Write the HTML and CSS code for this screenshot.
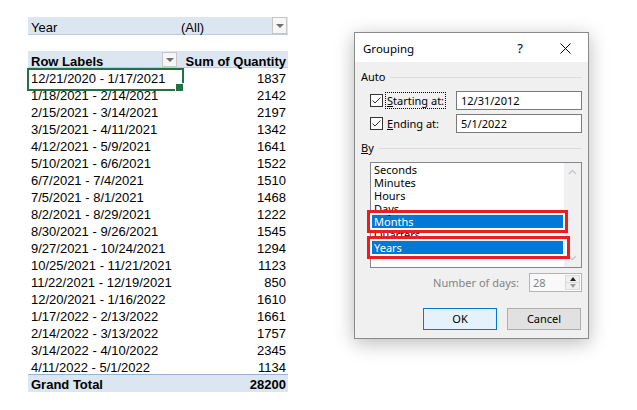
FILE: index.html
```html
<!DOCTYPE html>
<html>
<head>
<meta charset="utf-8">
<title>Grouping</title>
<link rel="stylesheet" href="styles.css">
</head>
<body>
<div class="pivot">
  <div class="filter-row">
    <div class="c1"><span class="txt pl3">Year</span></div>
    <div class="c2"><span class="txt pl1">(All)</span><span class="dd dd-filter"></span></div>
  </div>
  <div class="head-row">
    <div class="c1"><span class="txt pl3 b">Row Labels</span><span class="dd dd-head"></span></div>
    <div class="c2 num"><span class="txt b">Sum of Quantity</span></div>
  </div>
  <div class="row"><div class="c1 sel"><span class="txt pl3">12/21/2020 - 1/17/2021</span></div><div class="c2 num"><span class="txt">1837</span></div></div>
  <div class="row"><div class="c1"><span class="txt pl3">1/18/2021 - 2/14/2021</span></div><div class="c2 num"><span class="txt">2142</span></div></div>
  <div class="row"><div class="c1"><span class="txt pl3">2/15/2021 - 3/14/2021</span></div><div class="c2 num"><span class="txt">2197</span></div></div>
  <div class="row"><div class="c1"><span class="txt pl3">3/15/2021 - 4/11/2021</span></div><div class="c2 num"><span class="txt">1342</span></div></div>
  <div class="row"><div class="c1"><span class="txt pl3">4/12/2021 - 5/9/2021</span></div><div class="c2 num"><span class="txt">1641</span></div></div>
  <div class="row"><div class="c1"><span class="txt pl3">5/10/2021 - 6/6/2021</span></div><div class="c2 num"><span class="txt">1522</span></div></div>
  <div class="row"><div class="c1"><span class="txt pl3">6/7/2021 - 7/4/2021</span></div><div class="c2 num"><span class="txt">1510</span></div></div>
  <div class="row"><div class="c1"><span class="txt pl3">7/5/2021 - 8/1/2021</span></div><div class="c2 num"><span class="txt">1468</span></div></div>
  <div class="row"><div class="c1"><span class="txt pl3">8/2/2021 - 8/29/2021</span></div><div class="c2 num"><span class="txt">1222</span></div></div>
  <div class="row"><div class="c1"><span class="txt pl3">8/30/2021 - 9/26/2021</span></div><div class="c2 num"><span class="txt">1545</span></div></div>
  <div class="row"><div class="c1"><span class="txt pl3">9/27/2021 - 10/24/2021</span></div><div class="c2 num"><span class="txt">1294</span></div></div>
  <div class="row"><div class="c1"><span class="txt pl3">10/25/2021 - 11/21/2021</span></div><div class="c2 num"><span class="txt">1123</span></div></div>
  <div class="row"><div class="c1"><span class="txt pl3">11/22/2021 - 12/19/2021</span></div><div class="c2 num"><span class="txt">850</span></div></div>
  <div class="row"><div class="c1"><span class="txt pl3">12/20/2021 - 1/16/2022</span></div><div class="c2 num"><span class="txt">1610</span></div></div>
  <div class="row"><div class="c1"><span class="txt pl3">1/17/2022 - 2/13/2022</span></div><div class="c2 num"><span class="txt">1661</span></div></div>
  <div class="row"><div class="c1"><span class="txt pl3">2/14/2022 - 3/13/2022</span></div><div class="c2 num"><span class="txt">1757</span></div></div>
  <div class="row"><div class="c1"><span class="txt pl3">3/14/2022 - 4/10/2022</span></div><div class="c2 num"><span class="txt">2345</span></div></div>
  <div class="row"><div class="c1"><span class="txt pl3">4/11/2022 - 5/1/2022</span></div><div class="c2 num"><span class="txt">1134</span></div></div>
  <div class="total-row">
    <div class="c1"><span class="txt pl3 b">Grand Total</span></div>
    <div class="c2 num"><span class="txt b">28200</span></div>
  </div>
</div>

<div class="dialog">
  <div class="titlebar">
    <span class="title">Grouping</span>
    <span class="help">?</span>
    <svg class="close" width="11" height="11" viewBox="0 0 11 11"><path d="M0.5 0.5L10.5 10.5M10.5 0.5L0.5 10.5" stroke="#000" stroke-width="1" fill="none"/></svg>
  </div>
  <div class="dlg-body">
    <div class="group-label"><span>Auto</span><i class="rule"></i></div>
    <div class="field-row first">
      <span class="cb"><svg width="11" height="11" viewBox="0 0 11 11"><path d="M1.5 5.5L4 8L9.5 2.5" stroke="#333" stroke-width="1" fill="none"/></svg></span>
      <span class="lbl focus"><u>S</u>tarting at:</span>
      <span class="input">12/31/2012</span>
    </div>
    <div class="field-row">
      <span class="cb"><svg width="11" height="11" viewBox="0 0 11 11"><path d="M1.5 5.5L4 8L9.5 2.5" stroke="#333" stroke-width="1" fill="none"/></svg></span>
      <span class="lbl"><u>E</u>nding at:</span>
      <span class="input">5/1/2022</span>
    </div>
    <div class="group-label by"><span><u>B</u>y</span><i class="rule"></i></div>
    <div class="listbox">
      <div class="items">
        <div class="item">Seconds</div>
        <div class="item">Minutes</div>
        <div class="item">Hours</div>
        <div class="item">Days</div>
        <div class="item on">Months</div>
        <div class="item">Quarters</div>
        <div class="item on">Years</div>
      </div>
      <div class="scroll">
        <svg width="9" height="6" viewBox="0 0 9 6"><path d="M1 5L4.5 1.5L8 5" stroke="#c6c6c6" stroke-width="1.4" fill="none"/></svg>
        <svg width="9" height="6" viewBox="0 0 9 6"><path d="M1 1L4.5 4.5L8 1" stroke="#c6c6c6" stroke-width="1.4" fill="none"/></svg>
      </div>
      <div class="mark mark-months"></div>
      <div class="mark mark-years"></div>
    </div>
    <div class="days-row">
      <span class="days-lbl">Number of days:</span>
      <span class="spin">
        <span class="spin-val">28</span>
        <span class="spin-btns">
          <span class="spin-btn"><i class="tri-up"></i></span>
          <span class="spin-btn"><i class="tri-down"></i></span>
        </span>
      </span>
    </div>
    <div class="buttons">
      <span class="btn ok">OK</span>
      <span class="btn">Cancel</span>
    </div>
  </div>
</div>
</body>
</html>
```

FILE: styles.css
```css
* { box-sizing: border-box; }
html, body { margin: 0; padding: 0; background: #fff; }
body {
  width: 637px;
  height: 410px;
  position: relative;
  overflow: hidden;
  font-family: "Liberation Sans", Arial, sans-serif;
}

/* ---------- pivot table ---------- */
.pivot {
  margin: 17px 0 0 28px;
  width: 260px;
  font-size: 13px;
  color: #000;
}
.filter-row, .head-row, .row, .total-row { display: flex; }
.c1 { width: 152px; display: flex; align-items: flex-start; position: relative; }
.c2 { width: 108px; display: flex; align-items: flex-start; }
.num { justify-content: flex-end; padding-right: 2px; }
.txt { line-height: 17px; margin-top: 2px; white-space: nowrap; }
.pl3 { padding-left: 3px; }
.pl1 { padding-left: 1px; }
.b { font-weight: bold; }

.filter-row {
  height: 18px;
  background: #dce6f1;
  border-bottom: 1px solid #b8cce4;
}
.head-row {
  margin-top: 16px;
  height: 17px;
  background: #dce6f1;
  border-bottom: 1px solid #b8cce4;
}
.row { height: 17px; }
.total-row {
  height: 18px;
  background: #dce6f1;
  border-top: 1px solid #95b3d7;
}
.total-row .txt { margin-top: 1px; }

.dd {
  width: 15px;
  height: 17px;
  margin-left: auto;
  border: 1px solid #c6c6c6;
  background: #f6f6f6;
  position: relative;
}
.dd::after {
  content: "";
  position: absolute;
  left: 3px;
  top: 6px;
  border-left: 4px solid transparent;
  border-right: 4px solid transparent;
  border-top: 4px solid #6f6f6f;
}
.dd-filter { margin-right: 1px; }
.dd-head { height: 15px; margin-top: 1px; margin-right: 3px; }
.dd-head::after { top: 5px; }

.sel::after {
  content: "";
  position: absolute;
  left: -1px;
  top: 0;
  width: 153px;
  height: 19px;
  border: 2px solid #217346;
}
.sel::before {
  content: "";
  position: absolute;
  left: 147px;
  top: 15px;
  width: 7px;
  height: 7px;
  background: #217346;
  border: 1px solid #fff;
  z-index: 2;
}

/* ---------- dialog ---------- */
.dialog {
  position: absolute;
  left: 354px;
  top: 32px;
  width: 235px;
  height: 307px;
  border: 1px solid #8a8a8a;
  background: #f0f0f0;
  box-shadow: 0 4px 18px rgba(0, 0, 0, 0.28);
  font-family: "Noto Sans", "Open Sans", sans-serif;
  font-size: 11px;
  color: #000;
}
.titlebar {
  height: 29px;
  background: #fff;
  display: flex;
  align-items: center;
  padding-left: 8px;
}
.title { font-size: 11.5px; margin-top: 1px; }
.help { margin-left: auto; font-size: 13px; margin-top: 0px; }
.close { margin-left: 37px; margin-right: 17px; margin-top: 1px; }

.dlg-body { padding: 0 6px; }
.group-label {
  display: flex;
  align-items: center;
  height: 14px;
  margin-top: 8px;
  line-height: 14px;
}
.group-label .rule {
  flex: 1;
  height: 1px;
  margin-left: 5px;
  background: #dcdcdc;
  margin-top: 1px;
}
.group-label.by { margin-top: 8px; }

.field-row {
  display: flex;
  align-items: center;
  height: 19px;
  margin-top: 4px;
}
.field-row.first { margin-top: 7px; }
.cb {
  width: 13px;
  height: 13px;
  margin-left: 9px;
  border: 1px solid #333;
  background: #fff;
  display: flex;
}
.lbl {
  margin-left: 2px;
  padding: 0 1px;
  height: 17px;
  line-height: 15px;
  border: 1px dotted transparent;
}
.lbl.focus { border-color: #000; }
.input {
  margin-left: auto;
  width: 126px;
  height: 19px;
  border: 1px solid #7a7a7a;
  background: #fff;
  padding-left: 4px;
  line-height: 17px;
}

.listbox {
  position: relative;
  margin: 7px 0 0 9px;
  width: 212px;
  height: 106px;
  border: 1px solid #828790;
  background: #fff;
  display: flex;
}
.items { margin-left: 1px; width: 191px; }
.item {
  height: 13px;
  line-height: 13px;
  padding-left: 2px;
  white-space: nowrap;
}
.item.on { background: #0078d7; color: #fff; }
.scroll {
  margin-left: auto;
  width: 17px;
  background: #f0f0f0;
  display: flex;
  flex-direction: column;
  align-items: center;
  justify-content: space-between;
  padding: 6px 0 6px;
}
.mark {
  position: absolute;
  left: -4px;
  width: 201px;
  height: 23px;
  border: 3px solid #ec1c24;
  box-shadow: inset 0 0 0 2px #fff;
}
.mark-months { top: 47px; }
.mark-years { top: 73px; width: 203px; }

.days-row {
  display: flex;
  justify-content: flex-end;
  align-items: center;
  height: 19px;
  margin-top: 5px;
}
.days-lbl { color: #838383; margin-right: 10px; }
.spin {
  width: 53px;
  height: 19px;
  border: 1px solid #b4b4b4;
  background: #fff;
  display: flex;
}
.spin-val { color: #838383; padding-left: 3px; line-height: 17px; flex: 1; background: #f9f9f9; }
.spin-btns { width: 15px; display: flex; flex-direction: column; margin: 1px 1px 1px 0; }
.spin-btn {
  flex: 1;
  display: flex;
  align-items: center;
  justify-content: center;
  background: #f0f0f0;
  border: 1px solid #dadada;
}
.spin-btn + .spin-btn { border-top: none; }
.tri-up {
  border-left: 3px solid transparent;
  border-right: 3px solid transparent;
  border-bottom: 4px solid #222;
}
.tri-down {
  border-left: 3px solid transparent;
  border-right: 3px solid transparent;
  border-top: 4px solid #a0a0a0;
}

.buttons {
  display: flex;
  justify-content: flex-end;
  gap: 10px;
  margin-top: 16px;
  margin-right: 1px;
}
.btn {
  width: 74px;
  height: 22px;
  border: 1px solid #adadad;
  background: #e1e1e1;
  text-align: center;
  line-height: 20px;
}
.btn.ok { border-color: #0078d7; background: #e5f1fb; }
```
